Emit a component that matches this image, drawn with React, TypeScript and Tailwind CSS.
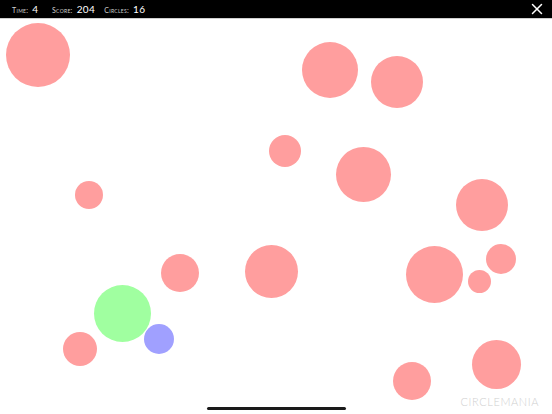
import { X } from "lucide-react"

type Circle = { x: number; y: number; r: number; color: string }

const RED = "#ff9e9e"

const circles: Circle[] = [
  { x: 38, y: 55, r: 32, color: RED },
  { x: 330, y: 70, r: 28, color: RED },
  { x: 397, y: 81.5, r: 26, color: RED },
  { x: 285, y: 150.5, r: 16, color: RED },
  { x: 363.5, y: 174, r: 27.5, color: RED },
  { x: 89, y: 195, r: 14, color: RED },
  { x: 482, y: 205, r: 26, color: RED },
  { x: 501, y: 259, r: 15, color: RED },
  { x: 479, y: 281, r: 11.5, color: RED },
  { x: 434, y: 274, r: 28.5, color: RED },
  { x: 271.5, y: 271.5, r: 26.5, color: RED },
  { x: 179.5, y: 273, r: 19, color: RED },
  { x: 122.5, y: 313, r: 28.5, color: "#a0ffa0" },
  { x: 159, y: 338.5, r: 15, color: "#a0a0ff" },
  { x: 80, y: 349, r: 17, color: RED },
  { x: 412, y: 381, r: 19, color: RED },
  { x: 496.5, y: 364, r: 24.5, color: RED },
]

const TOP = 19

function Stat({ label, value, className = "" }: { label: string; value: string; className?: string }) {
  return (
    <div className={`flex items-baseline gap-[4px] ${className}`}>
      <span className="text-[7px] text-[#d0d0d0] [font-variant:small-caps] tracking-[0.3px]">{label}</span>
      <span className="text-[10px] text-white tracking-[0.4px]">{value}</span>
    </div>
  )
}

export default function App() {
  return (
    <div className="w-[552px] h-[414px] flex flex-col bg-white overflow-hidden font-['Lato','Open_Sans',sans-serif]">
      <div className="h-[19px] shrink-0 bg-black border-b border-[#cfcfcf] flex items-center pl-[12px] pr-[6px]">
        <div className="flex items-baseline gap-[9px]">
          <Stat label="Time:" value="4" className="w-[31px]" />
          <Stat label="Score:" value="204" />
          <Stat label="Circles:" value="16" />
        </div>
        <button className="ml-auto text-white">
          <X size={18} strokeWidth={2} />
        </button>
      </div>
      <div className="relative flex-1">
        {circles.map((c, i) => (
          <div
            key={i}
            className="absolute rounded-full"
            style={{
              left: c.x - c.r,
              top: c.y - c.r - TOP,
              width: c.r * 2,
              height: c.r * 2,
              backgroundColor: c.color,
            }}
          />
        ))}
        <div className="absolute right-[13px] bottom-[7px] text-[11px] leading-none tracking-[0.6px] text-[#cfcfcf] font-light">
          CIRCLEMANIA
        </div>
        <div className="absolute left-[207px] bottom-[4px] w-[139px] h-[3px] rounded-full bg-[#1a1a1a]" />
      </div>
    </div>
  )
}
